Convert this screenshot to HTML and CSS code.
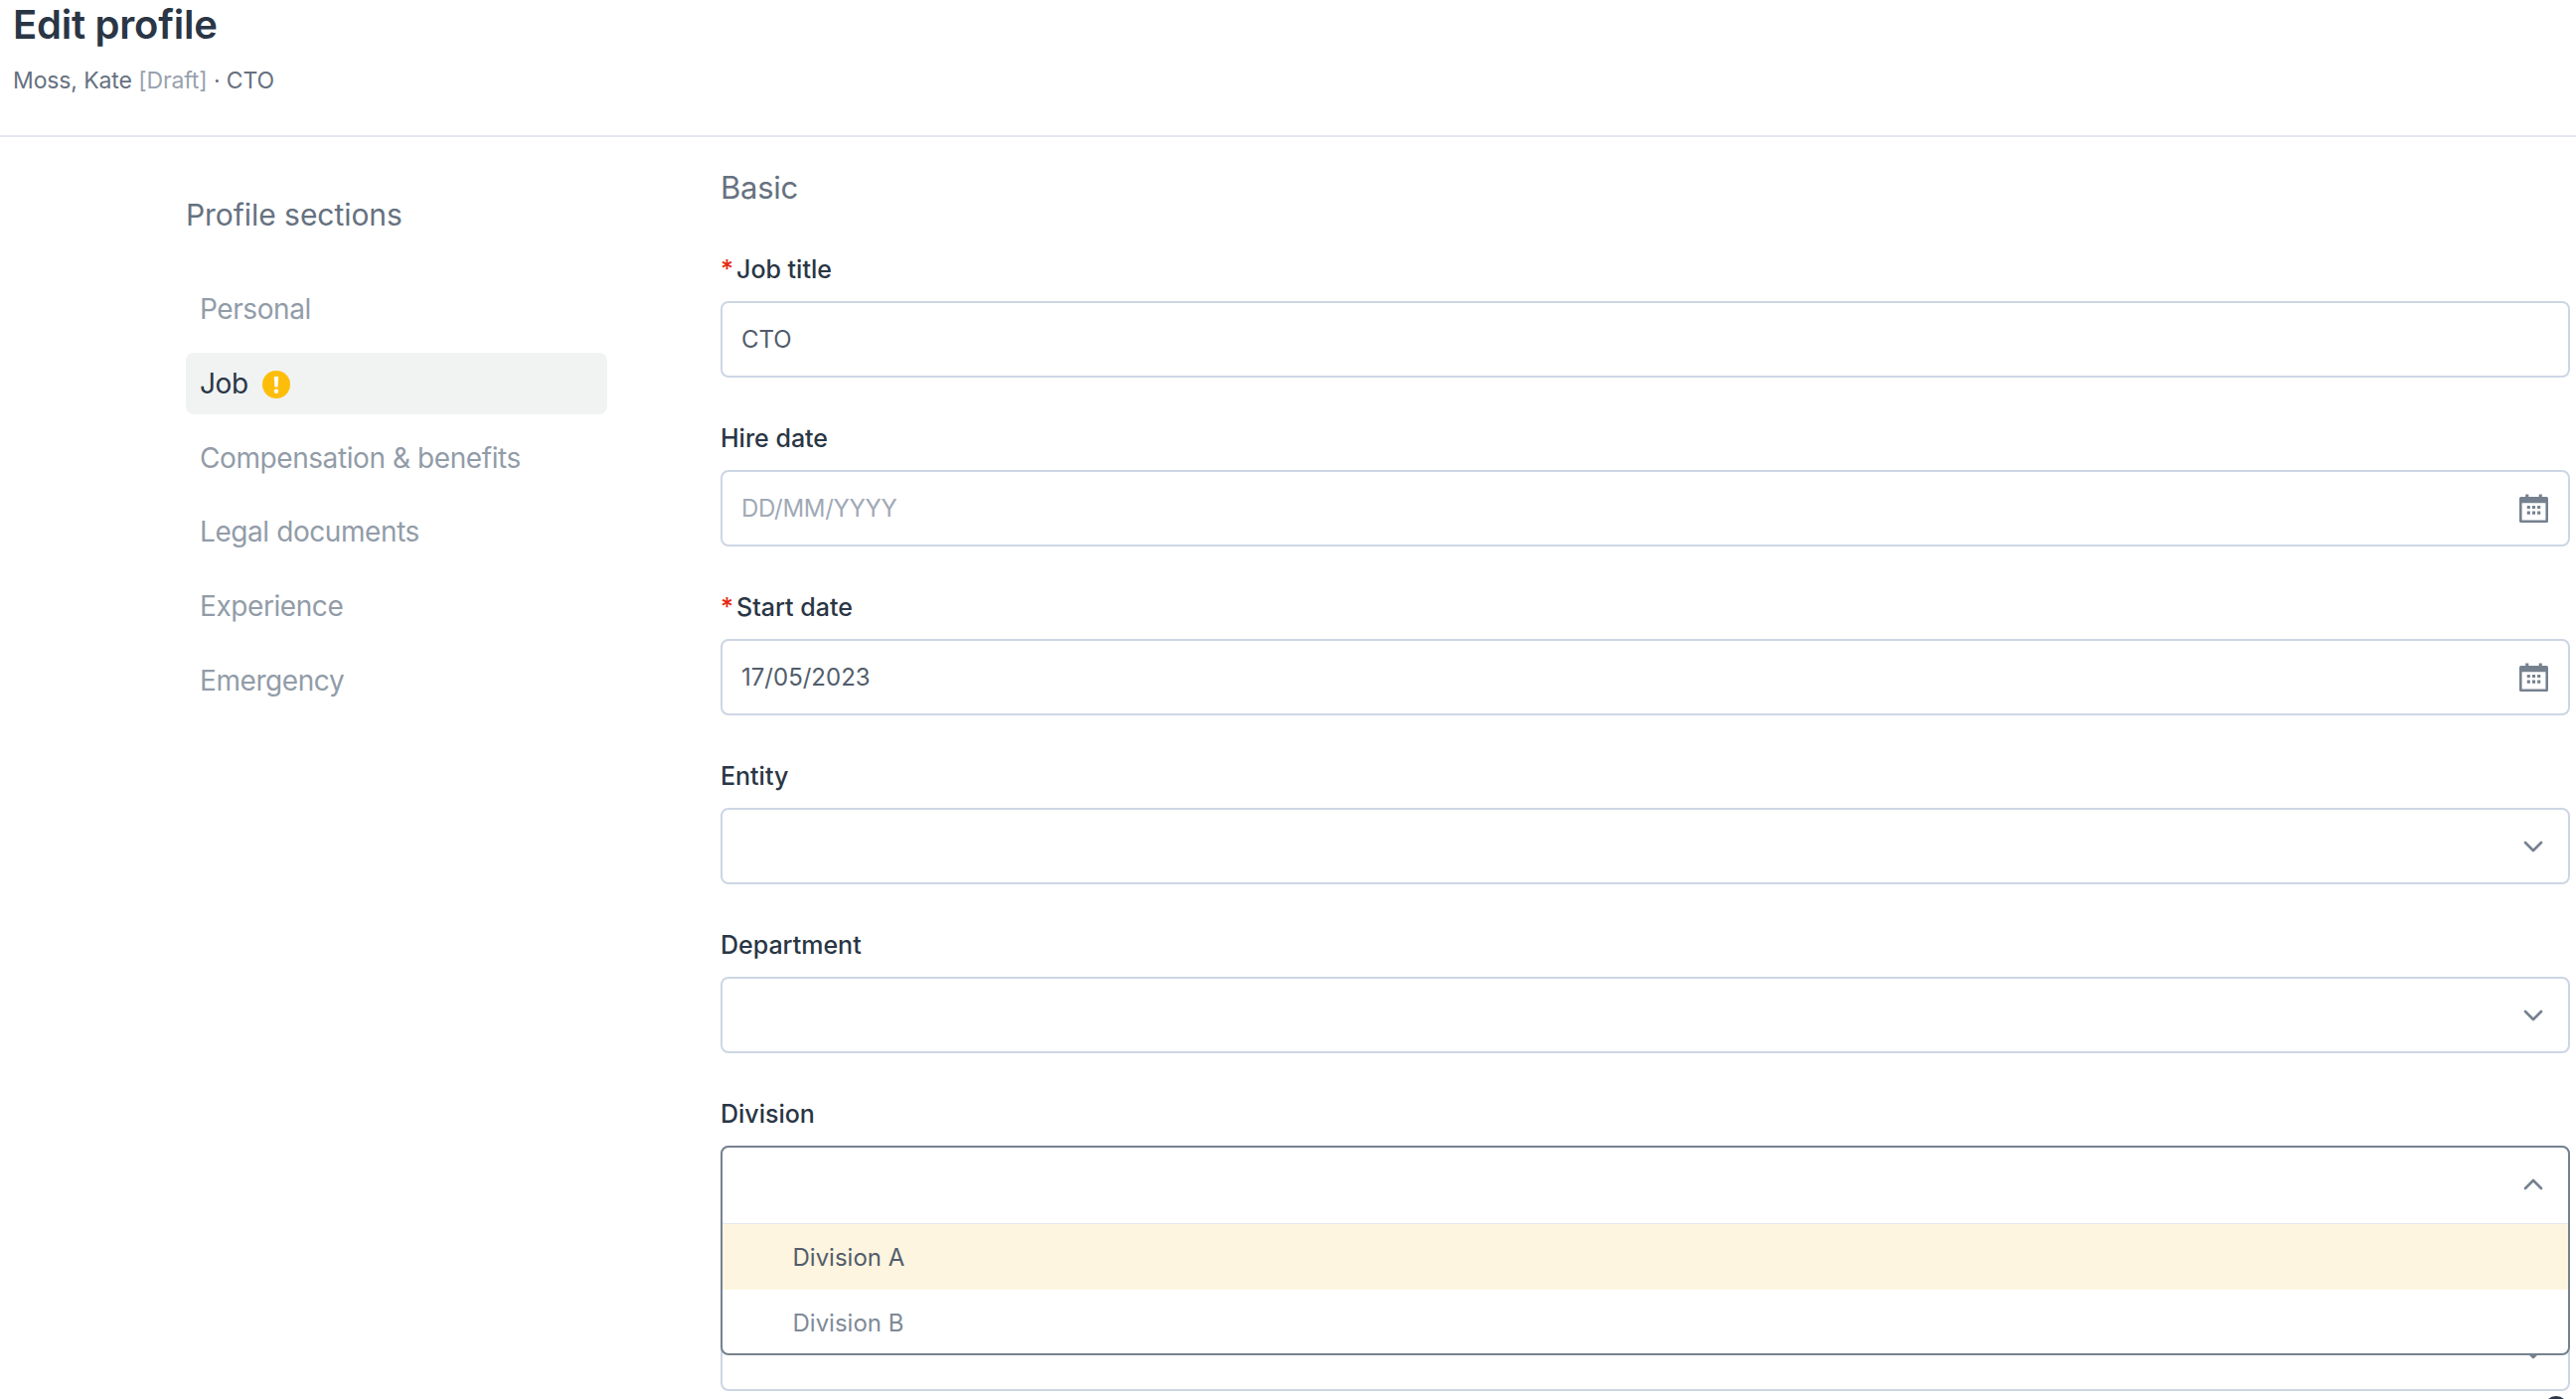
FILE: index.html
```html
<!DOCTYPE html>
<html lang="en">
<head>
<meta charset="utf-8">
<title>Edit profile</title>
<link rel="stylesheet" href="styles.css">
</head>
<body>
<svg class="sprite" width="0" height="0" aria-hidden="true">
  <symbol id="cal" viewBox="0 0 28 28">
    <path fill="#76818f" fill-rule="evenodd" d="M6 0.500h3v2.500h10V0.500h3V3h4.500a1.500 1.500 0 0 1 1.500 1.500v22a1.500 1.500 0 0 1-1.500 1.500h-25A1.500 1.500 0 0 1 0 26.500v-22A1.500 1.500 0 0 1 1.500 3H6zM2.500 9v16.500h23V9z"/>
    <path fill="#76818f" d="M7.500 11.500h3v3h-3zM12.500 11.500h3v3h-3zM17.500 11.500h3v3h-3zM7.500 17h3v3h-3zM12.500 17h3v3h-3zM17.500 17h3v3h-3z"/>
  </symbol>
  <symbol id="chev" viewBox="0 0 20 12">
    <path fill="none" stroke="#76818f" stroke-width="2.600" stroke-linecap="round" stroke-linejoin="round" d="M2 2l8 8 8-8"/>
  </symbol>
</svg>
<header class="top">
  <h1 class="title">Edit profile</h1>
  <p class="sub">Moss, Kate <span class="draft">[Draft]</span> · CTO</p>
</header>
<div class="layout">
  <aside class="side">
    <h2 class="side-title">Profile sections</h2>
    <nav class="nav">
      <a class="nav-item">Personal</a>
      <a class="nav-item active">Job
        <svg class="warn" viewBox="0 0 28 28" aria-hidden="true"><circle cx="14" cy="14" r="14" fill="#fdbe0b"/><path fill="#fff" d="M11.800 6h4.400l-.7 10.500h-3z"/><circle cx="14" cy="20.800" r="2.200" fill="#fff"/></svg>
      </a>
      <a class="nav-item">Compensation &amp; benefits</a>
      <a class="nav-item">Legal documents</a>
      <a class="nav-item">Experience</a>
      <a class="nav-item">Emergency</a>
    </nav>
  </aside>
  <main class="main">
    <h2 class="section">Basic</h2>
    <div class="field">
      <label class="label"><span class="req">*</span>Job title</label>
      <div class="input"><span class="value">CTO</span></div>
    </div>
    <div class="field">
      <label class="label">Hire date</label>
      <div class="input"><span class="placeholder">DD/MM/YYYY</span><svg class="cal"><use href="#cal"/></svg></div>
    </div>
    <div class="field">
      <label class="label"><span class="req">*</span>Start date</label>
      <div class="input"><span class="value">17/05/2023</span><svg class="cal"><use href="#cal"/></svg></div>
    </div>
    <div class="field">
      <label class="label">Entity</label>
      <div class="input"><svg class="chev"><use href="#chev"/></svg></div>
    </div>
    <div class="field">
      <label class="label">Department</label>
      <div class="input"><svg class="chev"><use href="#chev"/></svg></div>
    </div>
    <div class="field">
      <label class="label">Division</label>
      <div class="select-wrap">
        <div class="input"><svg class="chev"><use href="#chev"/></svg></div>
        <div class="dropdown">
          <div class="dd-head"><svg class="chev up"><use href="#chev"/></svg></div>
          <div class="option hover">Division A</div>
          <div class="option">Division B</div>
        </div>
      </div>
    </div>
    <div class="field">
      <label class="label">Location</label>
      <div class="input"><svg class="chev"><use href="#chev"/></svg></div>
    </div>
  </main>
</div>
<div class="corner-btn"></div>
</body>
</html>
```

FILE: styles.css
```css
* { box-sizing: border-box; }
html, body { margin: 0; height: 1408px; overflow: hidden; background: #fff; }
body { position: relative; font-family: Inter, "Liberation Sans", sans-serif; color: #1f2a37; }
.sprite { position: absolute; }

.top { height: 138px; padding: 0 0 0 13px; border-bottom: 2px solid #e3e8ee; }
.title { margin: 0; font-size: 40px; line-height: 50px; font-weight: 600; letter-spacing: -0.25px; color: #2a3645; }
.sub { margin: 17px 0 0; font-size: 23px; line-height: 28px; letter-spacing: -0.12px; color: #667180; }
.draft { color: #98a2af; }

.layout { display: grid; grid-template-columns: 424px 1861px; column-gap: 114px; padding-left: 187px; }

.side { padding-top: 56px; }
.side-title { margin: 0; font-size: 30px; line-height: 44px; font-weight: 400; letter-spacing: -0.05px; color: #667180; }
.nav { display: flex; flex-direction: column; gap: 13.200px; margin-top: 42.500px; }
.nav-item { display: flex; align-items: center; height: 61.500px; padding: 0 14px; font-size: 28px; letter-spacing: -0.42px; color: #929ca8; border-radius: 8px; }
.nav-item.active { background: #f1f3f3; color: #2a3645; }
.warn { width: 28px; height: 28px; margin: 3px 0 0 14px; }

.main { padding-top: 29px; }
.section { margin: 0 0 45px; font-size: 31px; line-height: 44px; font-weight: 400; letter-spacing: -0.25px; color: #667180; }
.field { height: 170px; }
.label { display: block; height: 47px; font-size: 25px; line-height: 30px; font-weight: 500; color: #2a3645; }
.req { color: #e5260f; margin-right: 3px; }

.input { display: flex; align-items: center; justify-content: space-between; height: 77px; padding: 0 19px; border: 2px solid #cdd6e4; border-radius: 8px; background: #fff; font-size: 24px; }
.value { color: #525d6b; }
.placeholder { color: #a0a9b6; letter-spacing: -0.3px; }
.cal { width: 29px; height: 29px; margin: 0 1px 0 auto; }
.chev { width: 20px; height: 12px; margin: 0 6px 0 auto; }
.chev.up { transform: rotate(180deg); margin-bottom: 2px; }

.select-wrap { position: relative; }
.dropdown { position: absolute; z-index: 2; top: 0; left: 0; right: 0; height: 211px; border: 2px solid #76818f; border-radius: 8px; background: #fff; overflow: hidden; }
.dd-head { display: flex; align-items: center; height: 77px; padding: 0 19px; border-bottom: 1px solid #e3e8ee; }
.option { display: flex; align-items: center; height: 66px; padding-left: 70.500px; font-size: 24px; color: #7f8a97; }
.option.hover { background: #fdf5df; color: #525d6b; }

.corner-btn { position: absolute; left: 2560px; top: 1405px; width: 24px; height: 24px; border-radius: 50%; background: #2a3645; }
```
